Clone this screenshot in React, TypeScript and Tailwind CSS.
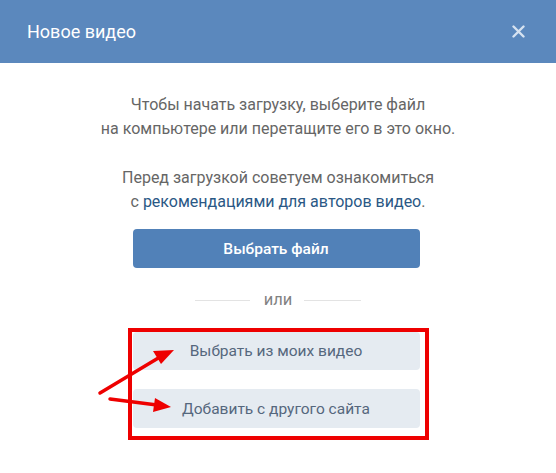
import React from 'react';

const font = { fontFamily: 'Roboto, "Open Sans", Arial, sans-serif' };

const UploadVideoModal: React.FC = () => {
  return (
    <div className="relative w-[556px] h-[473px] bg-white overflow-hidden" style={font}>
      {/* Header */}
      <div className="h-[63px] bg-[#5b88bd] flex items-center justify-between pl-[27px] pr-[31px]">
        <span className="text-white text-[18px] leading-none">Новое видео</span>
        <svg width="13" height="13" viewBox="0 0 13 13" className="text-[#d6e2f0]">
          <path d="M1.5 1.5 L11.5 11.5 M11.5 1.5 L1.5 11.5" stroke="currentColor" strokeWidth="2.4" strokeLinecap="round" />
        </svg>
      </div>

      {/* Body */}
      <div className="flex flex-col items-center pt-[30px] text-[16px] leading-[24px] text-[#666666] text-center">
        <p>
          Чтобы начать загрузку, выберите файл
          <br />
          на компьютере или перетащите его в это окно.
        </p>
        <p className="mt-[25px]">
          Перед загрузкой советуем ознакомиться
          <br />
          с <span className="text-[#2a5885]">рекомендациями для авторов видео</span>.
        </p>

        <button className="mt-[15px] mr-[4px] w-[287px] h-[39px] rounded-[4px] bg-[#5181b8] text-white text-[15.5px] font-medium">
          Выбрать файл
        </button>

        <div className="mt-[20px] flex items-center h-[24px]">
          <div className="w-[55px] h-px bg-[#e3e3e3]" />
          <span className="pl-[14px] pr-[12px] text-[#828282] text-[16.5px]">или</span>
          <div className="w-[57px] h-px bg-[#e3e3e3]" />
        </div>

        <div className="mt-[16px] w-[301px] border-4 border-[#ee0000] pl-px pr-[5px] pb-[8px] flex flex-col gap-[19px]">
          <button className="h-[38px] rounded-[4px] bg-[#e5ebf1] text-[#55677d] text-[15.5px]">
            Выбрать из моих видео
          </button>
          <button className="h-[39px] rounded-[4px] bg-[#e5ebf1] text-[#55677d] text-[15.5px]">
            Добавить с другого сайта
          </button>
        </div>
      </div>

      {/* Annotation arrows */}
      <svg className="absolute left-0 top-0 pointer-events-none" width="556" height="473" viewBox="0 0 556 473">
        <g stroke="#ee0000" strokeWidth="3.5" strokeLinecap="round" fill="#ee0000">
          <line x1="100" y1="393" x2="160" y2="357" />
          <line x1="110" y1="399" x2="157" y2="405" />
        </g>
        <g fill="#ee0000">
          <polygon points="174,350 153,351 161,364" />
          <polygon points="171,407 155,398 153,412" />
        </g>
      </svg>
    </div>
  );
};

export default function App() {
  return <UploadVideoModal />;
}
